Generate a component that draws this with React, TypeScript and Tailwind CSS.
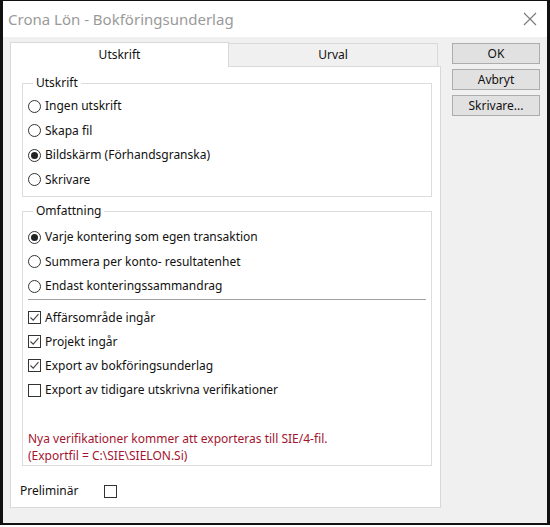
import * as React from 'react';

// --- Small Win32-style controls ---
const Radio = ({ checked, label }: { checked?: boolean; label: string }) => (
    <div className="flex items-center h-[24.5px] gap-[4px]">
        <span className="w-[13px] h-[13px] rounded-full border border-[#333] bg-white flex items-center justify-center shrink-0">
            {checked && <span className="w-[7px] h-[7px] rounded-full bg-[#222]" />}
        </span>
        <span>{label}</span>
    </div>
);

const CheckMark = () => (
    <svg width="11" height="11" viewBox="0 0 11 11" className="block">
        <path d="M1.5 5.5 L4.2 8.2 L9.5 2.2" fill="none" stroke="#444" strokeWidth="1.1" />
    </svg>
);

const Checkbox = ({ checked, label }: { checked?: boolean; label?: string }) => (
    <div className="flex items-center h-[24.2px] gap-[4px]">
        <span className="w-[13px] h-[13px] border border-[#333] bg-white flex items-center justify-center shrink-0">
            {checked && <CheckMark />}
        </span>
        {label && <span>{label}</span>}
    </div>
);

const GroupBox = ({ title, className, children }: { title: string; className?: string; children: React.ReactNode }) => (
    <fieldset className={"border border-[#dcdcdc] px-[5px] " + (className ?? "")}>
        <legend className="ml-[5px] px-[3px] leading-[16px]">{title}</legend>
        {children}
    </fieldset>
);

const DlgButton = ({ label }: { label: string }) => (
    <button className="h-[21px] w-full bg-[#e1e1e1] border border-[#adadad] leading-[19px] text-center">
        {label}
    </button>
);

export default function App() {
    return (
        <div className="w-[550px] h-[527px] bg-white">
            <div
                className="w-[550px] h-[525px] border-x-[3px] border-b-[2px] border-t border-[#111] flex flex-col text-[12px] text-[#111]"
                style={{ fontFamily: '"Noto Sans", "Segoe UI", sans-serif' }}
            >
                {/* title bar */}
                <div className="h-[36px] shrink-0 bg-white flex items-center justify-between pl-[5px] pr-[10px]">
                    <span className="text-[15px] text-[#9a9a9a]">Crona Lön - Bokföringsunderlag</span>
                    <svg width="14" height="14" viewBox="0 0 14 14">
                        <path d="M1 1 L13 13 M13 1 L1 13" stroke="#7a7a7a" strokeWidth="1.1" />
                    </svg>
                </div>

                {/* dialog body */}
                <div className="flex-1 bg-[#f0f0f0] flex pl-[7px] pt-[5px] gap-[11px]">
                    <div className="w-[431px] flex flex-col">
                        {/* tab strip */}
                        <div className="flex h-[24px] items-end">
                            <div className="w-[219px] h-[25px] -mb-px bg-white border border-b-0 border-[#d9d9d9] flex items-center justify-center relative z-10">
                                Utskrift
                            </div>
                            <div className="w-[209px] h-[23px] bg-[#f0f0f0] border border-l-0 border-b-0 border-[#d9d9d9] flex items-center justify-center">
                                Urval
                            </div>
                        </div>

                        {/* tab page */}
                        <div className="h-[442px] bg-white border border-[#d9d9d9] pl-[11px] pr-[8px] pt-[8px] flex flex-col">
                            <GroupBox title="Utskrift" className="pb-[4px]">
                                <div className="pt-[3px]">
                                    <Radio label="Ingen utskrift" />
                                    <Radio label="Skapa fil" />
                                    <Radio checked label="Bildskärm (Förhandsgranska)" />
                                    <Radio label="Skrivare" />
                                </div>
                            </GroupBox>

                            <GroupBox title="Omfattning" className="mt-[6px] pb-[1px]">
                                <div className="pt-[6px]">
                                    <Radio checked label="Varje kontering som egen transaktion" />
                                    <Radio label="Summera per konto- resultatenhet" />
                                    <Radio label="Endast konteringssammandrag" />
                                </div>
                                <div className="h-px bg-[#a0a0a0] mb-[6px]" />
                                <Checkbox checked label="Affärsområde ingår" />
                                <Checkbox checked label="Projekt ingår" />
                                <Checkbox checked label="Export av bokföringsunderlag" />
                                <Checkbox label="Export av tidigare utskrivna verifikationer" />
                                <div className="mt-[28px] text-[#a3152f] leading-[17px]">
                                    <div>Nya verifikationer kommer att exporteras till SIE/4-fil.</div>
                                    <div>(Exportfil = C:\SIE\SIELON.Si)</div>
                                </div>
                            </GroupBox>

                            <div className="flex items-center mt-[13px]">
                                <span className="w-[84px] -ml-[2px]">Preliminär</span>
                                <Checkbox />
                            </div>
                        </div>
                    </div>

                    {/* command buttons */}
                    <div className="w-[88px] flex flex-col gap-[5px] pt-[1px]">
                        <DlgButton label="OK" />
                        <DlgButton label="Avbryt" />
                        <DlgButton label="Skrivare..." />
                    </div>
                </div>
            </div>
        </div>
    );
}
